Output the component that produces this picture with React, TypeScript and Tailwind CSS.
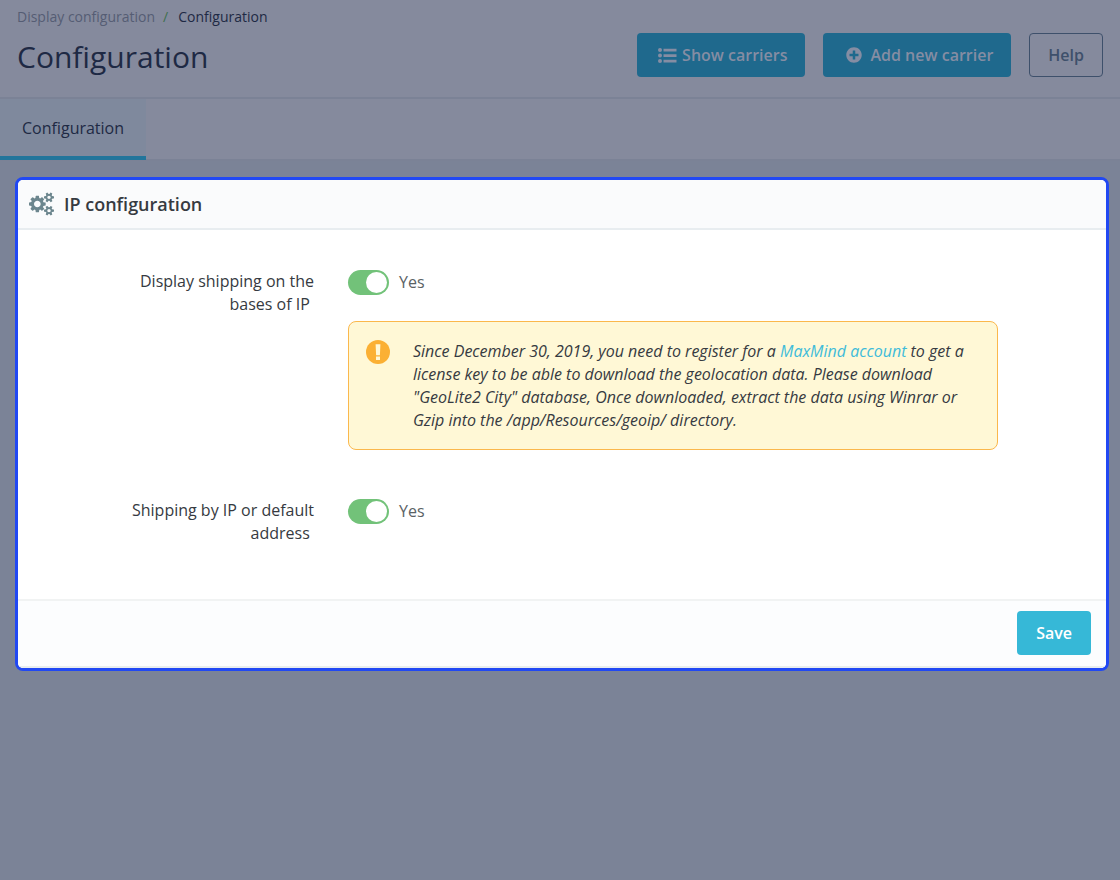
import React, { useState } from 'react';
import { FaPlusCircle } from 'react-icons/fa';

interface SwitchFieldProps {
  id: string;
  label: string;
  children?: React.ReactNode;
}

const CogsIcon = () => (
  <svg viewBox="0 0 1920 1792" className="h-6 w-[25px] shrink-0 fill-[#6c868e]" fillRule="evenodd" aria-hidden="true">
    <path d="M896 896q0-106-75-181t-181-75-181 75-75 181 75 181 181 75 181-75 75-181zm384-91v185q0 10-7 19.500t-16 10.500l-155 24q-11 35-32 76 34 48 90 115 7 11 7 20 0 12-7 19-23 30-82.500 89.500t-78.500 59.500q-11 0-21-7l-115-90q-37 19-77 31-11 108-23 155-7 24-30 24h-186q-11 0-20-7.500t-10-17.500l-23-153q-34-10-75-31l-118 89q-7 7-20 7-11 0-21-8-144-133-144-160 0-9 7-19 10-14 41-53t47-61q-23-44-35-82l-152-24q-10-1-17-9.500t-7-19.500v-185q0-10 7-19.500t16-10.500l155-24q11-35 32-76-34-48-90-115-7-11-7-20 0-12 7-20 22-30 82-89t79-59q11 0 21 7l115 90q34-18 77-32 11-108 23-154 7-24 30-24h186q11 0 20 7.500t10 17.500l23 153q34 10 75 31l118-89q8-7 20-7 11 0 21 8 144 133 144 160 0 8-7 19-12 16-42 54t-45 60q23 48 34 82l152 23q10 2 17 10.500t7 19.500z" />
    <path d="M1664 1408q0-52-38-90t-90-38-90 38-38 90q0 53 37.500 90.500t90.500 37.500 90.500-37.500 37.500-90.500zm256-70v140q0 16-149 31-12 27-30 52 51 113 51 138 0 4-4 7-122 71-124 71-8 0-46-47t-52-68q-20 2-30 2t-30-2q-14 21-52 68t-46 47q-2 0-124-71-4-3-4-7 0-25 51-138-18-25-30-52-149-15-149-31v-140q0-16 149-31 13-29 30-52-51-113-51-138 0-4 4-7 4-2 35-20t59-34 30-16q8 0 46 46.500t52 67.500q20-2 30-2t30 2q51-71 92-112l6-2q4 0 124 70 4 3 4 7 0 25-51 138 17 23 30 52 149 15 149 31z" />
    <path d="M1664 384q0-52-38-90t-90-38-90 38-38 90q0 53 37.500 90.500t90.500 37.500 90.500-37.500 37.500-90.500zm256-70v140q0 16-149 31-12 27-30 52 51 113 51 138 0 4-4 7-122 71-124 71-8 0-46-47t-52-68q-20 2-30 2t-30-2q-14 21-52 68t-46 47q-2 0-124-71-4-3-4-7 0-25 51-138-18-25-30-52-149-15-149-31v-140q0-16 149-31 13-29 30-52-51-113-51-138 0-4 4-7 4-2 35-20t59-34 30-16q8 0 46 46.500t52 67.500q20-2 30-2t30 2q51-71 92-112l6-2q4 0 124 70 4 3 4 7 0 25-51 138 17 23 30 52 149 15 149 31z" />
  </svg>
);

const ListIcon = () => (
  <svg viewBox="0 0 19 15" className="h-[15px] w-[19px] shrink-0 fill-current" aria-hidden="true">
    <circle cx="2" cy="2" r="2" />
    <circle cx="2" cy="7.500" r="2" />
    <circle cx="2" cy="13" r="2" />
    <path d="M5.500.700h13v2.700h-13zM5.500 6.200h13v2.700h-13zM5.500 11.700h13v2.700h-13z" />
  </svg>
);

const WarningIcon = () => (
  <svg viewBox="0 0 24 24" className="size-6 shrink-0" aria-hidden="true">
    <circle cx="12" cy="12" r="12" fill="#fbb034" />
    <path d="M9.600 4.200h4.800l-.500 11h-3.800zM10 16.600h4v3.400h-4z" fill="#fff8d6" />
  </svg>
);

const SwitchField: React.FC<SwitchFieldProps> = ({ id, label, children }) => {
  const [enabled, setEnabled] = useState(true);

  return (
    <div className="flex gap-[34px]">
      <div className="flex w-[296px] shrink-0 justify-end">
        <label htmlFor={id} className="w-[190px] text-right">{label}&nbsp;</label>
      </div>
      <div className="min-w-0 flex-1">
        <div className="flex items-center gap-[10px]">
          <input
            id={id}
            type="checkbox"
            role="switch"
            checked={enabled}
            onChange={(e) => setEnabled(e.target.checked)}
            className="flex h-[25px] w-[41px] appearance-none items-center rounded-full bg-[#b3c7cd] p-[2px] before:size-[21px] before:rounded-full before:bg-white before:content-[''] checked:justify-end checked:bg-[#72c279]"
          />
          <span className="text-[#5a6265]">{enabled ? 'Yes' : 'No'}</span>
        </div>
        {children}
      </div>
    </div>
  );
};

export default function App() {
  return (
    <div className="min-h-screen bg-[#7b8397] font-['Open_Sans',sans-serif] text-base leading-[23px] text-[#363a41]">
      <header className="flex items-start justify-between border-b-2 border-[#7b8296] bg-[#858a9d] pr-[17px] pb-[20px] pl-[17px]">
        <div className="pt-[5px]">
          <nav aria-label="Breadcrumb" className="flex text-sm leading-[23px]">
            <a href="#" className="text-[#555d74]">Display configuration</a>
            <span className="px-2 text-[#3f704f]">/</span>
            <span className="pl-[2px] text-[#1e2944]">Configuration</span>
          </nav>
          <h1 className="mt-[9px] text-[30px] leading-[40px] text-[#1e2944]">Configuration</h1>
        </div>
        <div className="flex gap-[18px] pt-[33px] font-semibold text-[#858da3]">
          <button className="flex h-11 items-center gap-[5px] rounded bg-[#1f698d] pr-[18px] pl-[21px]">
            <ListIcon />
            Show carriers
          </button>
          <button className="flex h-11 items-center gap-[8px] rounded bg-[#1f698d] pr-[18px] pl-[23px]">
            <FaPlusCircle size={16} />
            Add new carrier
          </button>
          <button className="h-11 rounded border border-[#3e506b] px-[18px] text-[#3e506b]">Help</button>
        </div>
      </header>

      <nav className="flex border-b-2 border-[#7b8296] bg-[#858a9d]">
        <a href="#" className="-mb-px flex h-[61px] items-center border-b-4 border-[#22759b] bg-[#7f899d] px-[22px] pt-[2px] text-[#1e2944]">
          Configuration
        </a>
      </nav>

      <main className="pt-[16px] pr-[11px] pb-[16px] pl-[15px]">
        <form onSubmit={(e) => e.preventDefault()} className="overflow-hidden rounded-lg border-[3px] border-[#2148f3] bg-white">
          <div className="flex h-[50px] items-center gap-[10px] border-b-2 border-[#e8edf0] bg-[#fafbfc] px-[11px]">
            <CogsIcon />
            <h2 className="text-lg leading-[23px] font-semibold">IP configuration</h2>
          </div>

          <div className="flex flex-col gap-[49px] pt-10 pr-[108px] pb-[54px]">
            <SwitchField id="display-shipping" label="Display shipping on the bases of IP">
              <div className="mt-[26px] flex gap-[23px] rounded-lg border border-[#fbb84c] bg-[#fff8d6] p-[17px] pt-[18px]">
                <WarningIcon />
                <p className="italic">
                  Since December 30, 2019, you need to register for a{' '}
                  <a href="#" className="text-[#3ebcda]">MaxMind account</a> to get a license key to be able to download
                  the geolocation data. Please download "GeoLite2 City" database, Once downloaded, extract the data using
                  Winrar or Gzip into the /app/Resources/geoip/ directory.
                </p>
              </div>
            </SwitchField>
            <SwitchField id="shipping-default" label="Shipping by IP or default address" />
          </div>

          <div className="flex justify-end border-y-2 border-t-[#f1f3f3] border-b-[#e8edee] bg-[#fcfdfe] px-[15px] pt-[10px] pb-[11px]">
            <button type="submit" className="h-11 rounded bg-[#36b8d7] px-[19px] font-semibold text-white">Save</button>
          </div>
        </form>
      </main>
    </div>
  );
}
